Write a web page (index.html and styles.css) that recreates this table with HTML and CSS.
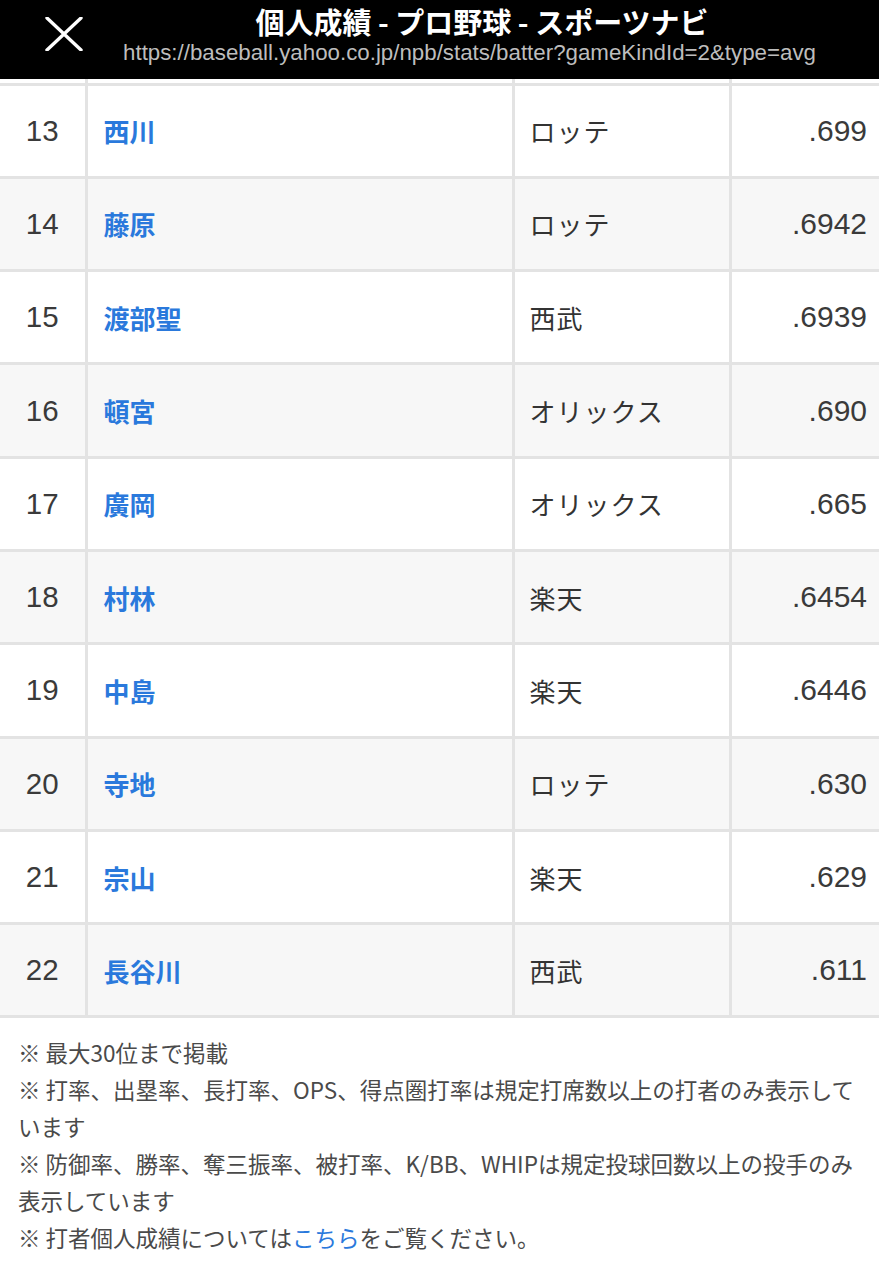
FILE: index.html
```html
<!DOCTYPE html>
<html lang="ja">
<head>
<meta charset="utf-8">
<title>個人成績 - プロ野球 - スポーツナビ</title>
<link rel="stylesheet" href="styles.css">
</head>
<body>
<header class="topbar">
  <div class="close">
    <svg width="38" height="34" viewBox="0 0 38 34"><path d="M2 1 L36 33 M36 1 L2 33" stroke="#fff" stroke-width="3.4" stroke-linecap="round" fill="none"/></svg>
  </div>
  <div class="titles">
    <div class="title">個人成績 - プロ野球 - スポーツナビ</div>
    <div class="url">https://baseball.yahoo.co.jp/npb/stats/batter?gameKindId=2&amp;type=avg</div>
  </div>
</header>
<table class="stats">
  <colgroup><col class="c-rank"><col class="c-name"><col class="c-team"><col class="c-val"></colgroup>
  <tr class="partial"><td></td><td></td><td></td><td></td></tr>
  <tr><td class="rank">13</td><td class="name"><a href="#">西川</a></td><td class="team">ロッテ</td><td class="val">.699</td></tr>
  <tr class="alt"><td class="rank">14</td><td class="name"><a href="#">藤原</a></td><td class="team">ロッテ</td><td class="val">.6942</td></tr>
  <tr><td class="rank">15</td><td class="name"><a href="#">渡部聖</a></td><td class="team">西武</td><td class="val">.6939</td></tr>
  <tr class="alt"><td class="rank">16</td><td class="name"><a href="#">頓宮</a></td><td class="team">オリックス</td><td class="val">.690</td></tr>
  <tr><td class="rank">17</td><td class="name"><a href="#">廣岡</a></td><td class="team">オリックス</td><td class="val">.665</td></tr>
  <tr class="alt"><td class="rank">18</td><td class="name"><a href="#">村林</a></td><td class="team">楽天</td><td class="val">.6454</td></tr>
  <tr><td class="rank">19</td><td class="name"><a href="#">中島</a></td><td class="team">楽天</td><td class="val">.6446</td></tr>
  <tr class="alt"><td class="rank">20</td><td class="name"><a href="#">寺地</a></td><td class="team">ロッテ</td><td class="val">.630</td></tr>
  <tr><td class="rank">21</td><td class="name"><a href="#">宗山</a></td><td class="team">楽天</td><td class="val">.629</td></tr>
  <tr class="alt"><td class="rank">22</td><td class="name"><a href="#">長谷川</a></td><td class="team">西武</td><td class="val">.611</td></tr>
</table>
<div class="notes">
  <p>※ 最大30位まで掲載</p>
  <p>※ 打率、出塁率、長打率、OPS、得点圏打率は規定打席数以上の打者のみ表示しています</p>
  <p>※ 防御率、勝率、奪三振率、被打率、K/BB、WHIPは規定投球回数以上の投手のみ表示しています</p>
  <p>※ 打者個人成績については<a href="#">こちら</a>をご覧ください。</p>
</div>
</body>
</html>
```
FILE: styles.css
```css
html, body {
  margin: 0;
  padding: 0;
  background: #fff;
  font-family: "Noto Sans CJK JP", "Noto Sans", sans-serif;
  color: #333;
}
.topbar {
  height: 79px;
  background: #000;
  display: flex;
  align-items: stretch;
}
.close {
  width: 85px;
  flex: none;
  display: flex;
  align-items: center;
  justify-content: center;
  padding-left: 42px;
  padding-bottom: 12px;
  box-sizing: border-box;
}
.titles {
  flex: 1;
  display: flex;
  flex-direction: column;
  align-items: center;
  padding-top: 1px;
}
.title {
  color: #fff;
  font-weight: 700;
  font-size: 29px;
  line-height: 40px;
}
.url {
  color: #bdbdbd;
  font-family: "Liberation Sans", "Noto Sans", sans-serif;
  font-size: 22.3px;
  line-height: 24px;
  padding-right: 25px;
}
.stats {
  width: 100%;
  border-collapse: collapse;
  table-layout: fixed;
}
.c-rank { width: 86px; }
.c-name { width: 427px; }
.c-team { width: 217px; }
.c-val { width: auto; }
.stats td {
  border: 3px solid #e3e3e3;
  height: 93.3px;
  padding: 0;
  font-size: 26px;
  vertical-align: middle;
  box-sizing: border-box;
}
.stats tr td:first-child { border-left: none; }
.stats tr td:last-child { border-right: none; }
.stats tr.partial td {
  height: 5px;
  border-top: none;
}
.stats tr.alt td { background: #f7f7f7; }
.rank {
  text-align: center;
  font-family: "Liberation Sans", sans-serif;
  font-size: 29.5px !important;
  color: #3a3a3a;
}
.name { padding-left: 16px !important; }
.name a {
  color: #2a79dc;
  font-weight: 700;
  text-decoration: none;
}
.team { padding-left: 15px !important; letter-spacing: 1px; }
.val {
  text-align: right;
  padding-right: 12px !important;
  font-family: "Liberation Sans", sans-serif;
  font-size: 30px !important;
  color: #3a3a3a;
}
.notes {
  padding: 16px 10px 0 18px;
  color: #4a4a4a;
  font-size: 22.5px;
  line-height: 37px;
}
.notes p { margin: 0; }
.notes a { color: #2a79dc; text-decoration: none; }
```
